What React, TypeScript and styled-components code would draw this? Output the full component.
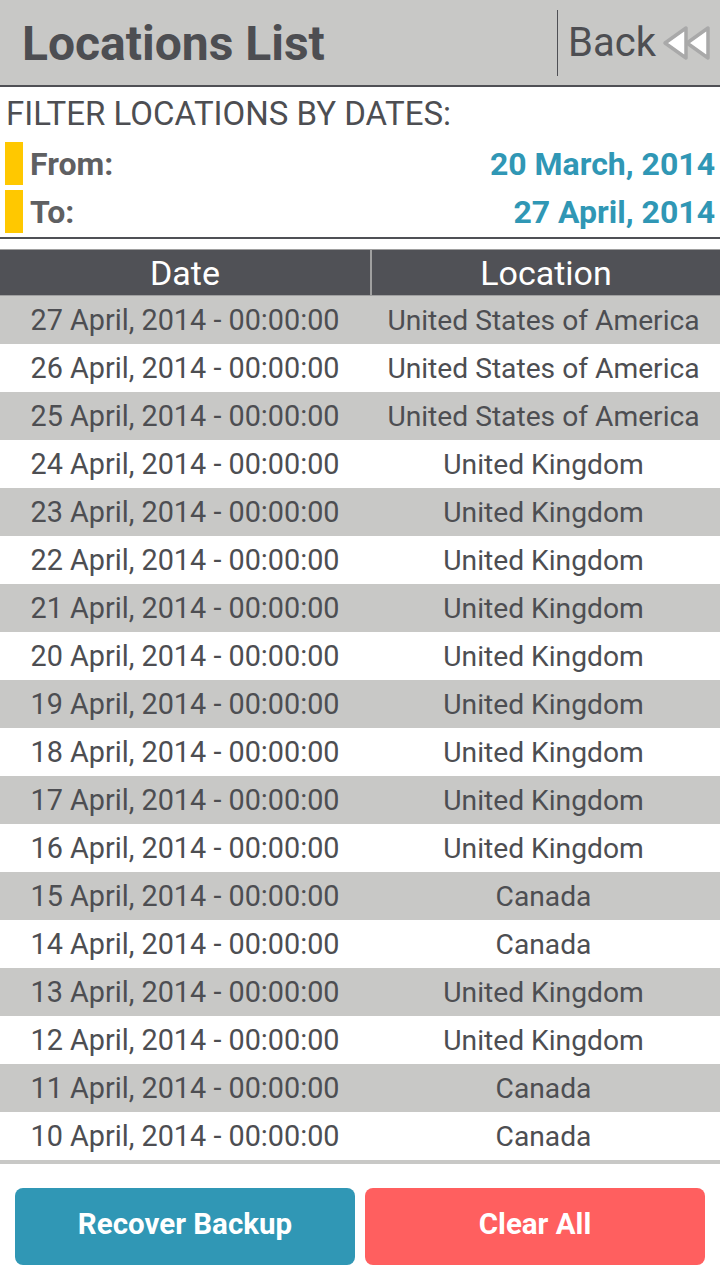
import styled, { createGlobalStyle } from 'styled-components';

type Entry = {
  day: number;
  location: string;
}

const entries: Entry[] = [
  { day: 27, location: 'United States of America' },
  { day: 26, location: 'United States of America' },
  { day: 25, location: 'United States of America' },
  { day: 24, location: 'United Kingdom' },
  { day: 23, location: 'United Kingdom' },
  { day: 22, location: 'United Kingdom' },
  { day: 21, location: 'United Kingdom' },
  { day: 20, location: 'United Kingdom' },
  { day: 19, location: 'United Kingdom' },
  { day: 18, location: 'United Kingdom' },
  { day: 17, location: 'United Kingdom' },
  { day: 16, location: 'United Kingdom' },
  { day: 15, location: 'Canada' },
  { day: 14, location: 'Canada' },
  { day: 13, location: 'United Kingdom' },
  { day: 12, location: 'United Kingdom' },
  { day: 11, location: 'Canada' },
  { day: 10, location: 'Canada' },
];

const colors = {
  gray: '#c8c8c6',
  dark: '#4d4e52',
  header: '#505156',
  blue: '#3097b5',
  red: '#ff5f5f',
  yellow: '#ffc800',
};

const GlobalStyle = createGlobalStyle`
  html, body {
    margin: 0;
    padding: 0;
    background: #ffffff;
  }
  body {
    font-family: Roboto, "Liberation Sans", sans-serif;
    color: ${colors.dark};
  }
`;

function RewindIcon () {
  return (
    <svg width="50" height="36" viewBox="0 0 50 36">
      <g fill="#ffffff" stroke="#a9a9a9" strokeWidth="3.5" strokeLinejoin="round">
        <path d="M3 18 L24 3 L24 33 Z" />
        <path d="M25 18 L46 3 L46 33 Z" />
      </g>
    </svg>
  );
}

function App () {
  return (
    <Screen>
      <GlobalStyle />
      <TopBar>
        <Title>Locations List</Title>
        <BackButton>
          Back
          <RewindIcon />
        </BackButton>
      </TopBar>

      <Filter>
        <FilterLabel>FILTER LOCATIONS BY DATES:</FilterLabel>
        <DateRow>
          <Marker />
          <DateLabel>From:</DateLabel>
          <DateValue>20 March, 2014</DateValue>
        </DateRow>
        <DateRow>
          <Marker />
          <DateLabel>To:</DateLabel>
          <DateValue>27 April, 2014</DateValue>
        </DateRow>
      </Filter>

      <Table>
        <HeadRow>
          <HeadCell>Date</HeadCell>
          <HeadCell>Location</HeadCell>
        </HeadRow>
        {entries.map((entry, index) => (
          <Row key={entry.day} $shaded={index % 2 === 0}>
            <Cell $size={28.8}>{entry.day} April, 2014 - 00:00:00</Cell>
            <Cell $size={28.2} $shift={-3}>{entry.location}</Cell>
          </Row>
        ))}
      </Table>

      <Actions>
        <ActionButton $color={colors.blue}>Recover Backup</ActionButton>
        <ActionButton $color={colors.red}>Clear All</ActionButton>
      </Actions>
    </Screen>
  );
}

const Screen = styled.div`
  width: 720px;
  min-height: 1280px;
  display: flex;
  flex-direction: column;
  background: #ffffff;
`;

const TopBar = styled.header`
  height: 85px;
  background: ${colors.gray};
  border-bottom: 2px solid #4f5055;
  display: flex;
  align-items: center;
  justify-content: space-between;
`;

const Title = styled.h1`
  margin: 2px 0 0 22px;
  font-size: 48px;
  font-weight: 700;
  color: ${colors.dark};
`;

const BackButton = styled.button`
  height: 66px;
  margin-right: 8px;
  padding: 0 0 0 10px;
  border: none;
  border-left: 1px solid #4f5055;
  background: transparent;
  display: flex;
  align-items: center;
  gap: 6px;
  font-family: inherit;
  font-size: 40px;
  color: ${colors.dark};
`;

const Filter = styled.section`
  padding: 8px 5px 4px 5px;
  border-bottom: 2px solid #4f5055;
  display: flex;
  flex-direction: column;
  gap: 5px;
`;

const FilterLabel = styled.div`
  font-size: 33px;
  line-height: 38px;
  padding-left: 1px;
  margin-bottom: 4px;
`;

const DateRow = styled.div`
  display: flex;
  align-items: center;
  height: 43px;
`;

const Marker = styled.span`
  width: 18px;
  align-self: stretch;
  background: ${colors.yellow};
  margin-right: 7px;
`;

const DateLabel = styled.span`
  font-size: 32px;
  font-weight: 700;
  color: #5f6062;
  flex: 1;
`;

const DateValue = styled.span`
  font-size: 32px;
  font-weight: 700;
  color: ${colors.blue};
`;

const Table = styled.div`
  margin-top: 10px;
  display: flex;
  flex-direction: column;
  border-bottom: 4px solid ${colors.gray};
`;

const HeadRow = styled.div`
  display: grid;
  grid-template-columns: 370px 1fr;
  height: 45px;
  background: ${colors.header};
  border-top: 1px solid #a0a0a0;
  border-bottom: 1px solid #a0a0a0;
`;

const HeadCell = styled.div`
  display: flex;
  align-items: center;
  justify-content: center;
  color: #ffffff;
  font-size: 34px;
  & + & {
    border-left: 2px solid #a0a0a0;
  }
`;

const Row = styled.div<{ $shaded: boolean }>`
  display: grid;
  grid-template-columns: 370px 1fr;
  height: 48px;
  background: ${props => props.$shaded ? colors.gray : '#ffffff'};
`;

const Cell = styled.div<{ $size: number; $shift?: number }>`
  display: flex;
  align-items: center;
  justify-content: center;
  padding-left: ${props => props.$shift ? 0 : 0}px;
  margin-left: ${props => props.$shift ?? 0}px;
  font-size: ${props => props.$size}px;
  color: ${colors.dark};
  white-space: nowrap;
`;

const Actions = styled.div`
  display: grid;
  grid-template-columns: 1fr 1fr;
  gap: 10px;
  padding: 24px 15px 0 15px;
`;

const ActionButton = styled.button<{ $color: string }>`
  height: 77px;
  padding-bottom: 6px;
  border: none;
  border-radius: 8px;
  background: ${props => props.$color};
  color: #ffffff;
  font-family: inherit;
  font-size: 29.5px;
  font-weight: 700;
`;

export default App;
